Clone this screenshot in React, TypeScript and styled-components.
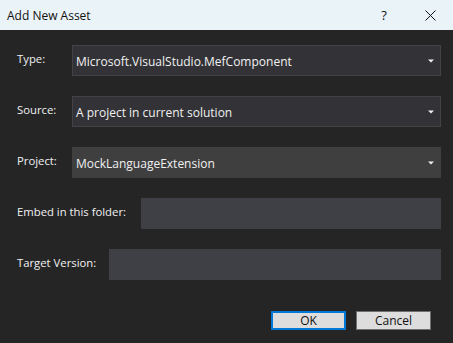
import React from "react";
import styled, { createGlobalStyle } from "styled-components";

const GlobalStyle = createGlobalStyle`
  html, body {
    margin: 0;
    padding: 0;
    background: #252526;
  }
  body {
    font-family: "Open Sans", "Noto Sans", sans-serif;
  }
`;

const Window = styled.div`
  width: 453px;
  height: 343px;
  background: #252526;
  display: flex;
  flex-direction: column;
  overflow: hidden;
`;

const TitleBar = styled.div`
  height: 30px;
  background: #eaf3f8;
  display: flex;
  align-items: center;
  padding-left: 7px;
  box-sizing: border-box;
`;

const Title = styled.div`
  flex: 1;
  font-size: 12px;
  color: #111;
`;

const TitleButton = styled.div`
  width: 46px;
  height: 30px;
  display: flex;
  align-items: center;
  justify-content: center;
  font-size: 13px;
  color: #111;
`;

const Body = styled.div`
  display: flex;
  flex-direction: column;
  gap: 20px;
  padding: 15px 12px 0 17px;
`;

const Row = styled.div`
  display: flex;
  align-items: flex-start;
`;

const Label = styled.div<{ $width: number }>`
  width: ${(p) => p.$width}px;
  flex-shrink: 0;
  padding-top: 6px;
  font-size: 11.3px;
  color: #f1f1f1;
  white-space: nowrap;
`;

const Combo = styled.div<{ $focused?: boolean }>`
  flex: 1;
  height: 31px;
  box-sizing: border-box;
  background: ${(p) => (p.$focused ? "#3f3f40" : "#333337")};
  border: 1px solid ${(p) => (p.$focused ? "#3f3f40" : "#434346")};
  display: flex;
  align-items: center;
  padding: 0 6px 0 3px;
  color: #f1f1f1;
  font-size: 12px;
`;

const ComboText = styled.div`
  flex: 1;
  padding-top: 1px;
`;

const TextBox = styled.div`
  flex: 1;
  height: 31px;
  background: #3f3f46;
`;

const Footer = styled.div`
  display: flex;
  justify-content: flex-end;
  gap: 10px;
  padding: 31px 22px 0 0;
`;

const Button = styled.div<{ $default?: boolean }>`
  width: 75px;
  height: 19px;
  box-sizing: border-box;
  background: #dddddd;
  border: ${(p) => (p.$default ? "2px solid #0078d7" : "1px solid #707070")};
  display: flex;
  align-items: center;
  justify-content: center;
  font-size: 12px;
  color: #111;
`;

const Arrow = () => (
  <svg width="6" height="4" viewBox="0 0 6 4">
    <path d="M0 0.5 H6 L3 3.5 Z" fill="#f1f1f1" />
  </svg>
);

const CloseIcon = () => (
  <svg width="11" height="11" viewBox="0 0 11 11">
    <path d="M0.5 0.5 L10.5 10.5 M10.5 0.5 L0.5 10.5" stroke="#111" strokeWidth="1" />
  </svg>
);

const App: React.FC = () => {
  return (
    <Window>
      <GlobalStyle />
      <TitleBar>
        <Title>Add New Asset</Title>
        <TitleButton>?</TitleButton>
        <TitleButton>
          <CloseIcon />
        </TitleButton>
      </TitleBar>
      <Body>
        <Row>
          <Label $width={55}>Type:</Label>
          <Combo>
            <ComboText>Microsoft.VisualStudio.MefComponent</ComboText>
            <Arrow />
          </Combo>
        </Row>
        <Row>
          <Label $width={55}>Source:</Label>
          <Combo>
            <ComboText>A project in current solution</ComboText>
            <Arrow />
          </Combo>
        </Row>
        <Row>
          <Label $width={55}>Project:</Label>
          <Combo $focused>
            <ComboText>MockLanguageExtension</ComboText>
            <Arrow />
          </Combo>
        </Row>
        <Row>
          <Label $width={124}>Embed in this folder:</Label>
          <TextBox />
        </Row>
        <Row>
          <Label $width={92}>Target Version:</Label>
          <TextBox />
        </Row>
      </Body>
      <Footer>
        <Button $default>OK</Button>
        <Button>Cancel</Button>
      </Footer>
    </Window>
  );
};

export default App;
